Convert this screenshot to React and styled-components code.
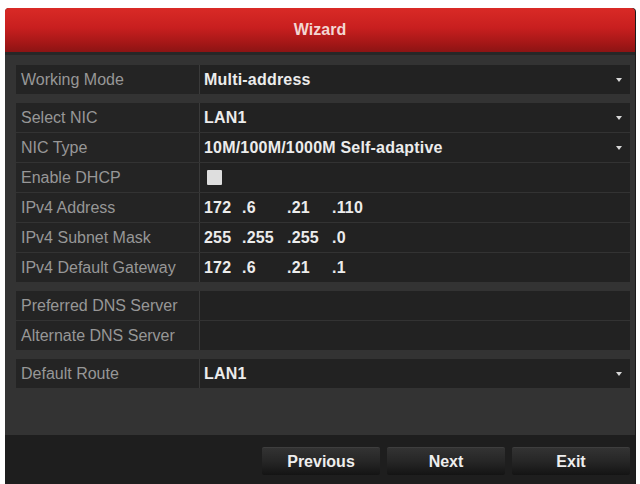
import React from "react";
import styled, { createGlobalStyle } from "styled-components";

const Global = createGlobalStyle`
  html, body { margin: 0; padding: 0; background: #ffffff; }
  body { font-family: "Liberation Sans", Arial, sans-serif; }
`;

const Page = styled.div`
  width: 640px;
  height: 484px;
  padding: 8px 5px 0 5px;
  box-sizing: border-box;
  overflow: hidden;
`;

const Panel = styled.div`
  width: 630px;
  height: 476px;
  display: flex;
  flex-direction: column;
  background: #333333;
  border-radius: 4px 4px 0 0;
  overflow: hidden;
  box-shadow: 1px 0 0 #1a1a1a;
`;

const Header = styled.div`
  height: 44px;
  flex: none;
  display: flex;
  align-items: center;
  justify-content: center;
  background: linear-gradient(#d92a26 0%, #c81f1f 45%, #a41717 80%, #8c1414 100%);
  border-bottom: 3px solid #272727;
  color: #f3d6d3;
  font-size: 16px;
  font-weight: bold;
`;

const Body = styled.div`
  flex: 1;
  display: flex;
  flex-direction: column;
  gap: 9px;
  padding: 10px 5px 0 11px;
  background: #333333;
`;

const Group = styled.div`
  display: flex;
  flex-direction: column;
  gap: 1px;
`;

const Row = styled.div`
  display: grid;
  grid-template-columns: 183px 1fr;
  gap: 1px;
  height: 29px;
  background: #3a3a3a;
`;

const Label = styled.div`
  display: flex;
  align-items: center;
  padding-left: 5px;
  background: #242424;
  color: #979797;
  font-size: 16px;
  white-space: nowrap;
`;

const Value = styled.div`
  display: flex;
  align-items: center;
  padding: 0 8px 0 4px;
  background: #222222;
  color: #ececec;
  font-size: 16px;
  font-weight: bold;
  white-space: nowrap;
  letter-spacing: 0.2px;
`;

const Text = styled.span`
  flex: 1;
`;

const Caret = styled.span`
  width: 0;
  height: 0;
  border-left: 3.5px solid transparent;
  border-right: 3.5px solid transparent;
  border-top: 4px solid #d8d8d8;
`;

const Checkbox = styled.span`
  width: 15px;
  height: 15px;
  margin-left: 3px;
  background: #dedede;
  border-radius: 1px;
`;

const Octet = styled.span`
  width: ${(p) => (p.$first ? "38px" : "45px")};
  flex: none;
`;

const Footer = styled.div`
  height: 49px;
  flex: none;
  display: flex;
  justify-content: flex-end;
  align-items: flex-start;
  gap: 7px;
  padding: 12px 5px 0 0;
  box-sizing: border-box;
  background: #1e1e1e;
`;

const Button = styled.div`
  width: 118px;
  height: 28px;
  display: flex;
  align-items: center;
  justify-content: center;
  background: linear-gradient(#333333 0%, #262626 50%, #141414 100%);
  border-top: 1px solid #3e3e3e;
  box-sizing: border-box;
  border-radius: 2px;
  color: #eeeeee;
  font-size: 16px;
  font-weight: bold;
`;

const Ip = ({ parts }) => (
  <Text>
    {parts.map((p, i) => (
      <Octet key={i} $first={i === 0} style={{ display: "inline-block" }}>
        {i === 0 ? p : "." + p}
      </Octet>
    ))}
  </Text>
);

const Field = ({ label, children, select }) => (
  <Row>
    <Label>{label}</Label>
    <Value>
      {children}
      {select && <Caret />}
    </Value>
  </Row>
);

export default function App() {
  return (
    <Page>
      <Global />
      <Panel>
        <Header>Wizard</Header>
        <Body>
          <Group>
            <Field label="Working Mode" select>
              <Text>Multi-address</Text>
            </Field>
          </Group>
          <Group>
            <Field label="Select NIC" select>
              <Text>LAN1</Text>
            </Field>
            <Field label="NIC Type" select>
              <Text>10M/100M/1000M Self-adaptive</Text>
            </Field>
            <Field label="Enable DHCP">
              <Checkbox />
            </Field>
            <Field label="IPv4 Address">
              <Ip parts={["172", "6", "21", "110"]} />
            </Field>
            <Field label="IPv4 Subnet Mask">
              <Ip parts={["255", "255", "255", "0"]} />
            </Field>
            <Field label="IPv4 Default Gateway">
              <Ip parts={["172", "6", "21", "1"]} />
            </Field>
          </Group>
          <Group>
            <Field label="Preferred DNS Server" />
            <Field label="Alternate DNS Server" />
          </Group>
          <Group>
            <Field label="Default Route" select>
              <Text>LAN1</Text>
            </Field>
          </Group>
        </Body>
        <Footer>
          <Button>Previous</Button>
          <Button>Next</Button>
          <Button>Exit</Button>
        </Footer>
      </Panel>
    </Page>
  );
}
